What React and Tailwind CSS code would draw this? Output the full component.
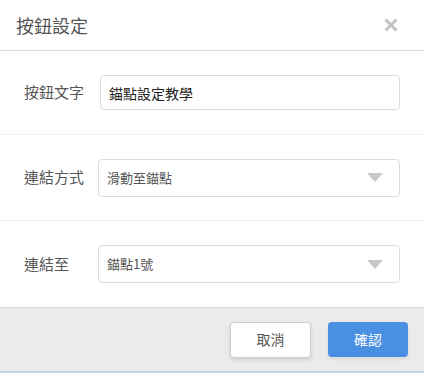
import { useState } from 'react'

const font = { fontFamily: '"Noto Sans CJK TC", "Noto Sans", sans-serif' }

function Caret() {
  return (
    <svg width="16" height="9" viewBox="0 0 16 9" className="shrink-0">
      <path d="M0 0 L16 0 L8 9 Z" fill="#c8c8c8" />
    </svg>
  )
}

function FieldRow({ label, children, border = true }) {
  return (
    <div className={`flex items-center pl-6 pr-6 h-[86px] ${border ? 'border-b border-[#efefef]' : ''}`}>
      <div className="w-[74px] shrink-0 text-[15px] text-[#555]">{label}</div>
      {children}
    </div>
  )
}

export default function App() {
  const [text, setText] = useState('錨點設定教學')

  return (
    <div className="w-[424px] h-[373px] bg-white flex flex-col overflow-hidden" style={font}>
      {/* Header */}
      <div className="h-[51px] flex items-center justify-between pl-4 pr-[26px] border-b border-[#dcdcdc] shrink-0">
        <h1 className="text-[18px] text-[#555]">按鈕設定</h1>
        <button className="text-[#c2c2c2]">
          <svg width="14" height="14" viewBox="0 0 14 14">
            <path d="M1.5 1.5 L12.5 12.5 M12.5 1.5 L1.5 12.5" stroke="currentColor" strokeWidth="3" />
          </svg>
        </button>
      </div>

      {/* Body */}
      <div className="flex flex-col">
        <div className="flex items-center pl-6 pr-6 h-[84px] border-b border-[#efefef]">
          <div className="w-[76px] shrink-0 text-[15px] text-[#555]">按鈕文字</div>
          <input
            value={text}
            onChange={(e) => setText(e.target.value)}
            className="flex-1 h-[35px] border border-[#dcdcdc] rounded-[4px] px-2 text-[14px] text-[#222] outline-none"
          />
        </div>
        <FieldRow label="連結方式">
          <div className="flex-1 h-[38px] border border-[#dcdcdc] rounded-[4px] pl-2 pr-4 flex items-center justify-between text-[13px] text-[#555]">
            <span>滑動至錨點</span>
            <Caret />
          </div>
        </FieldRow>
        <FieldRow label="連結至" border={false}>
          <div className="flex-1 h-[38px] border border-[#dcdcdc] rounded-[4px] pl-2 pr-4 flex items-center justify-between text-[13px] text-[#555]">
            <span>錨點1號</span>
            <Caret />
          </div>
        </FieldRow>
      </div>

      {/* Footer */}
      <div className="flex-1 bg-[#ebebeb] border-t border-[#dcdcdc] border-b-2 border-b-[#c9d6e0] flex items-center justify-end gap-[17px] pr-4">
        <button className="w-[81px] h-[36px] bg-white border border-[#c5d0db] rounded-[4px] text-[14px] text-[#555] shadow-[0_2px_4px_rgba(0,0,0,0.12)]">
          取消
        </button>
        <button className="w-[80px] h-[35px] bg-[#4a90e2] rounded-[4px] text-[14px] text-white shadow-[0_2px_4px_rgba(0,0,0,0.08)]">
          確認
        </button>
      </div>
    </div>
  )
}
